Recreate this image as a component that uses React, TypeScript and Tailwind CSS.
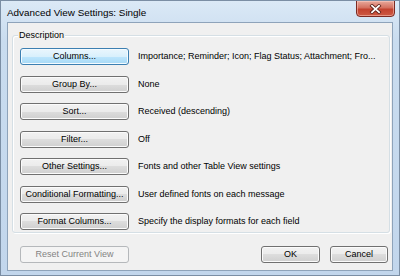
import React from "react";

const font = "font-['Liberation_Sans','Arial',sans-serif]";

function WinButton({
  label,
  width,
  variant = "normal",
}: {
  label: string;
  width: string;
  variant?: "normal" | "focus" | "disabled";
}) {
  const styles =
    variant === "focus"
      ? "border-[#3c7fb1] bg-[linear-gradient(#eaf6fd,#d9f0fc_50%,#bee6fd_50%,#a7d9f5)] shadow-[inset_0_0_0_1px_#f4fbff] text-black"
      : variant === "disabled"
      ? "border-[#b5b8bb] bg-[#f4f4f4] text-[#838383]"
      : "border-[#707070] bg-[linear-gradient(#f2f2f2,#ebebeb_50%,#dddddd_50%,#cfcfcf)] shadow-[inset_0_0_0_1px_#fbfbfb] text-black";
  return (
    <div
      className={`${width} h-[17px] shrink-0 rounded-[3px] border flex items-center justify-center text-[9px] leading-none ${styles}`}
    >
      {label}
    </div>
  );
}

const rows: [string, string, "normal" | "focus"][] = [
  ["Columns...", "Importance; Reminder; Icon; Flag Status; Attachment; Fro...", "focus"],
  ["Group By...", "None", "normal"],
  ["Sort...", "Received (descending)", "normal"],
  ["Filter...", "Off", "normal"],
  ["Other Settings...", "Fonts and other Table View settings", "normal"],
  ["Conditional Formatting...", "User defined fonts on each message", "normal"],
  ["Format Columns...", "Specify the display formats for each field", "normal"],
];

export default function App() {
  return (
    <div
      className={`${font} w-[400px] h-[276px] flex flex-col px-[6px] pb-[4px] border border-[#7b8ea4] bg-[linear-gradient(#dbe9f6,#c9dcef_40px,#c2d6ec)] text-black overflow-hidden`}
    >
      {/* Title bar */}
      <div className="h-[21px] shrink-0 flex items-start justify-between">
        <div className="pt-[6px] text-[9.9px] leading-[11px] text-black">
          Advanced View Settings: Single
        </div>
        <div className="mr-[-2px] mt-[-1px] w-[39px] h-[17px] rounded-b-[4px] border border-[#7c2a22] bg-[linear-gradient(#e8a99c,#d4705f_45%,#c3422f_55%,#cd5a43)] shadow-[inset_0_0_0_1px_rgba(255,210,200,0.5)] flex items-center justify-center">
          <svg width="13" height="10" viewBox="0 0 13 10">
            <path d="M3 1.8 L10 8.2 M10 1.8 L3 8.2" stroke="#5a1f18" strokeWidth="3.4" strokeLinecap="square" />
            <path d="M3 1.8 L10 8.2 M10 1.8 L3 8.2" stroke="#ffffff" strokeWidth="1.8" strokeLinecap="square" />
          </svg>
        </div>
      </div>

      {/* Client area */}
      <div className="flex-1 flex flex-col border border-[#8ea3ba] bg-[#f0f0f0] pt-[12px] pb-[7px]">
        <div className="relative ml-[4px] mr-[2px] border border-[#d5dfe5] rounded-[3px] shadow-[1px_1px_0_#ffffff,inset_1px_1px_0_#ffffff] pl-[7px] pt-[12px] pb-[2px] flex flex-col gap-[10.5px]">
          <span className="absolute left-[5px] top-[-7px] px-[1px] bg-[#f0f0f0] text-[9px] leading-[12px]">
            Description
          </span>
          {rows.map(([label, desc, v]) => (
            <div key={label} className="flex items-center">
              <WinButton label={label} width="w-[109px]" variant={v} />
              <span className="ml-[9px] text-[9px] leading-none whitespace-nowrap">{desc}</span>
            </div>
          ))}
        </div>
        <div className="mt-auto flex items-center pl-[12px] pr-[4px]">
          <WinButton label="Reset Current View" width="w-[109px]" variant="disabled" />
          <div className="ml-auto flex gap-[10px]">
            <WinButton label="OK" width="w-[59px]" />
            <WinButton label="Cancel" width="w-[58px]" />
          </div>
        </div>
      </div>
    </div>
  );
}
